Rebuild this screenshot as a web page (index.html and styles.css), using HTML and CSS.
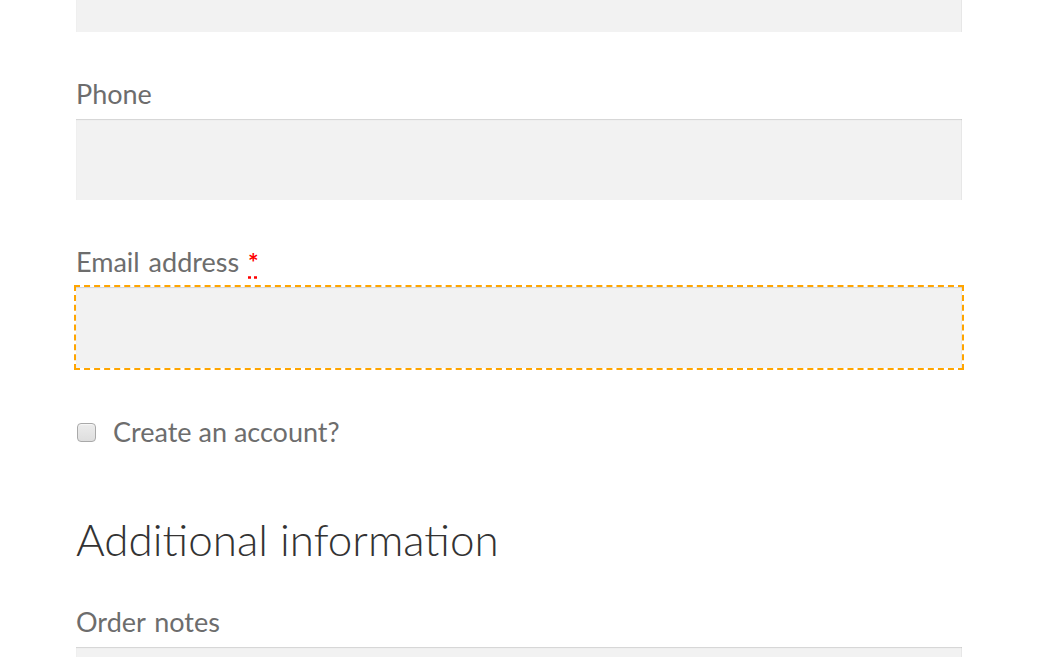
FILE: index.html
```html
<!DOCTYPE html>
<html lang="en">
<head>
<meta charset="utf-8">
<title>Checkout</title>
<link rel="stylesheet" href="styles.css">
</head>
<body>
<form class="checkout">
  <input class="field field-cut" type="text" aria-label="Company">
  <div class="row">
    <label class="label" for="phone">Phone</label>
    <input class="field" id="phone" type="tel">
  </div>
  <div class="row">
    <label class="label" for="email">Email address <abbr class="required" title="required">*</abbr></label>
    <input class="field field-focus" id="email" type="email">
  </div>
  <label class="account">
    <input class="check" type="checkbox">
    <span>Create an account?</span>
  </label>
  <h3 class="heading">Additional information</h3>
  <div class="row">
    <label class="label" for="notes">Order notes</label>
    <textarea class="field" id="notes"></textarea>
  </div>
</form>
</body>
</html>
```
FILE: styles.css
```css
html, body {
  margin: 0;
  padding: 0;
  background: #fff;
  overflow: hidden;
}
body {
  font-family: "Lato", "Liberation Sans", sans-serif;
  width: 1051px;
  height: 657px;
}
.checkout {
  display: flex;
  flex-direction: column;
  padding-left: 76px;
  width: 886px;
}
.field {
  display: block;
  box-sizing: border-box;
  width: 886px;
  height: 81px;
  margin: 0;
  padding: 0;
  border: 0;
  background: #f2f2f2;
  box-shadow: inset 0 1px 1px rgba(0, 0, 0, 0.125), inset -1px 0 0 rgba(0, 0, 0, 0.03);
  font: inherit;
  resize: none;
}
.field-cut {
  margin-top: -49px;
}
.field-focus {
  outline: 2px dashed #ffa500;
  outline-offset: 0;
}
.row {
  display: flex;
  flex-direction: column;
  margin-top: 46px;
}
.label {
  display: block;
  font-size: 27px;
  line-height: 32px;
  height: 32px;
  color: #6d6d6d;
  margin-bottom: 9px;
  word-spacing: 2px;
}
.required {
  color: #ff0000;
  text-decoration: underline dotted #ff0000;
  text-underline-offset: 4px;
  font-weight: 700;
  font-size: 25px;
  line-height: 1;
}
.account {
  display: flex;
  align-items: center;
  gap: 17px;
  margin-top: 48px;
  font-size: 27px;
  line-height: 32px;
  color: #6d6d6d;
}
.check {
  appearance: none;
  -webkit-appearance: none;
  box-sizing: border-box;
  width: 19px;
  height: 19px;
  margin: 0 0 0 1px;
  border: 1px solid #a9a9a9;
  border-radius: 4px;
  background: linear-gradient(#ececec, #dedede);
  box-shadow: inset 0 1px 1px rgba(255, 255, 255, 0.6);
}
.heading {
  margin: 63px 0 0;
  font-size: 44px;
  line-height: 56px;
  font-weight: 300;
  color: #333;
}
.heading + .row {
  margin-top: 39px;
}
```
